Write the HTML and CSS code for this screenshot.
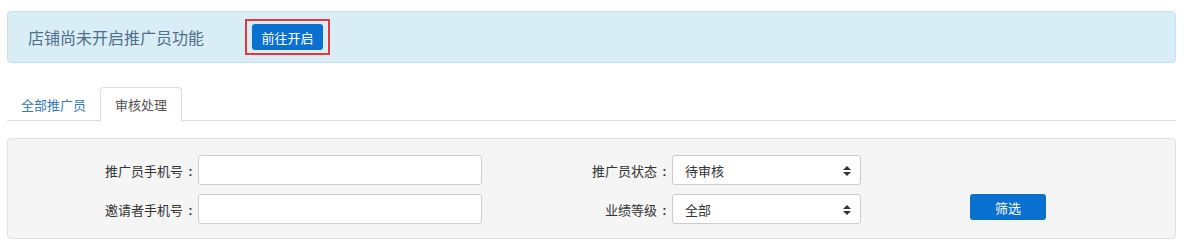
FILE: index.html
```html
<!DOCTYPE html>
<html lang="zh-CN">
<head>
    <meta charset="UTF-8">
    <title>推广员审核</title>
    <link rel="stylesheet" href="styles.css">
</head>
<body>

    <div class="page">
        <!-- 提示 -->
        <div class="alert">
            <span class="alert-text">店铺尚未开启推广员功能</span>
            <span class="alert-action"><button class="btn-primary btn-open">前往开启</button></span>
        </div>

        <!-- 标签页 -->
        <ul class="tabs">
            <li><a href="#">全部推广员</a></li>
            <li class="active"><a href="#">审核处理</a></li>
        </ul>

        <!-- 筛选 -->
        <div class="filter-panel">
            <div class="filter-col">
                <div class="field">
                    <label>推广员手机号<span class="colon">:</span></label>
                    <input type="text" class="input">
                </div>
                <div class="field">
                    <label>邀请者手机号<span class="colon">:</span></label>
                    <input type="text" class="input">
                </div>
            </div>
            <div class="filter-col col-select">
                <div class="field">
                    <label>推广员状态<span class="colon">:</span></label>
                    <div class="select">待审核<span class="caret"></span></div>
                </div>
                <div class="field">
                    <label>业绩等级<span class="colon">:</span></label>
                    <div class="select">全部<span class="caret"></span></div>
                </div>
            </div>
            <div class="filter-btn">
                <button class="btn-primary btn-filter">筛选</button>
            </div>
        </div>
    </div>

</body>
</html>
```

FILE: styles.css
```css
body {
    margin: 0;
    font-family: "Microsoft YaHei", "Noto Sans CJK SC", "Liberation Sans", sans-serif;
    font-size: 13px;
    color: #333;
    background: #fff;
}

.page {
    padding: 11px 8px 0 7px;
}

.alert {
    display: flex;
    align-items: center;
    height: 50px;
    padding: 0 20px;
    background-color: #d9edf7;
    border: 1px solid #c4e2ef;
    border-radius: 4px;
}

.alert-text {
    font-size: 16px;
    color: #4f6f88;
    width: 217px;
}

.alert-action {
    border: 2px solid #e2383b;
    padding: 3px 5px 3px 5px;
    display: flex;
}

.btn-primary {
    background-color: #0b71d0;
    color: #fff;
    border: none;
    border-radius: 3px;
    font-family: inherit;
    cursor: pointer;
}

.btn-open {
    width: 71px;
    height: 26px;
    font-size: 13px;
    padding: 0;
}

.tabs {
    list-style: none;
    margin: 24px 0 0 0;
    padding: 0;
    display: flex;
    border-bottom: 1px solid #ddd;
    height: 33px;
}

.tabs li {
    margin-bottom: -1px;
}

.tabs a {
    display: block;
    height: 33px;
    line-height: 33px;
    padding: 0 13px;
    color: #337ab7;
    text-decoration: none;
    border: 1px solid transparent;
    border-radius: 4px 4px 0 0;
}

.tabs li.active a {
    color: #555;
    background: #fff;
    border-color: #ddd;
    border-bottom-color: #fff;
    padding: 0 14px;
}

.filter-panel {
    display: flex;
    margin-top: 17px;
    height: 101px;
    background-color: #f5f5f5;
    border: 1px solid #e0e0e0;
    border-radius: 4px;
    box-sizing: border-box;
    padding-top: 16px;
}

.filter-col {
    display: flex;
    flex-direction: column;
    gap: 9px;
}

.field {
    display: flex;
    align-items: center;
}

.field label {
    width: 190px;
    text-align: right;
    color: #333;
}

.colon {
    display: inline-block;
    width: 15px;
    text-align: center;
    font-family: "Liberation Sans", sans-serif;
    font-weight: bold;
}

.input {
    width: 284px;
    height: 30px;
    box-sizing: border-box;
    border: 1px solid #ccc;
    border-radius: 3px;
    background: #fff;
    margin: 0;
    padding: 0 6px;
    font-family: inherit;
}

.col-select .field label {
    width: 190px;
}

.select {
    position: relative;
    width: 189px;
    height: 30px;
    box-sizing: border-box;
    border: 1px solid #ccc;
    border-radius: 3px;
    background: #fff;
    padding-left: 12px;
    line-height: 29px;
    color: #333;
}

.caret {
    position: absolute;
    right: 13px;
    top: 10px;
    width: 0;
    height: 0;
}

.caret::before,
.caret::after {
    content: "";
    position: absolute;
    left: -4px;
    border-left: 4px solid transparent;
    border-right: 4px solid transparent;
}

.caret::before {
    top: 0;
    border-bottom: 4px solid #333;
}

.caret::after {
    top: 6px;
    border-top: 4px solid #333;
}

.filter-btn {
    display: flex;
    align-items: flex-start;
    padding-top: 39px;
    margin-left: 109px;
}

.btn-filter {
    width: 76px;
    height: 26px;
    font-size: 13px;
    padding: 0;
}
```
